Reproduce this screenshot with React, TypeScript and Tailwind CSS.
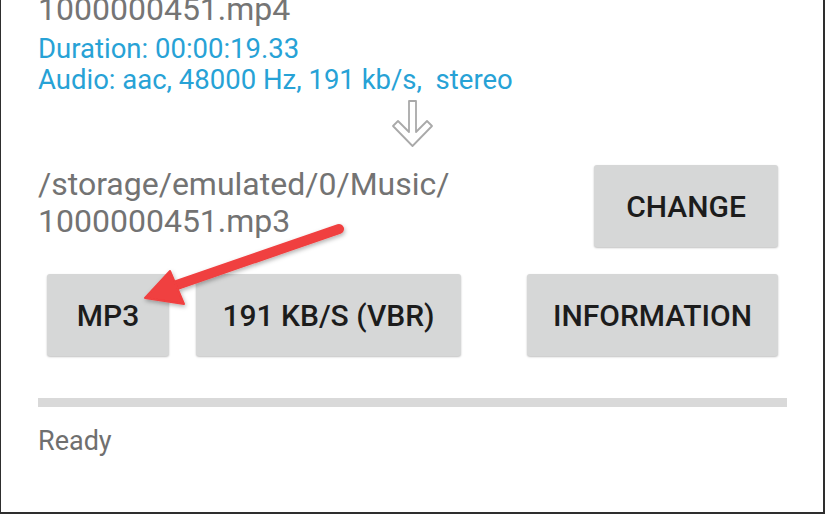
import React from "react";

const font = { fontFamily: "Roboto, 'Noto Sans', sans-serif" };

const Btn = ({ label, className }: { label: string; className: string }) => (
	<button
		type="button"
		className={`flex h-[82px] items-center justify-center rounded-[3px] bg-[#d6d7d7] text-[30px] font-medium text-[#1c1c1c] shadow-[0_1px_2px_rgba(0,0,0,0.25)] ${className}`}
	>
		{label}
	</button>
);

export default function App() {
	return (
		<div
			className="relative h-[514px] w-[825px] overflow-hidden border-b-2 border-l border-r-2 border-[#2e2e2e] bg-white pl-[37px] pr-[36px]"
			style={font}
		>
			<div className="-mt-[9px] text-[32px] leading-[37px] text-[#757575]">
				1000000451.mp4
			</div>

			<div className="mt-[5px] text-[27.5px] leading-[31px] text-[#27a2d6]">
				<div>Duration: 00:00:19.33</div>
				<div>Audio: aac, 48000 Hz, 191 kb/s,&nbsp; stereo</div>
			</div>

			{/* down arrow */}
			<div className="mt-[5px] flex h-[48px] pl-[352px]">
				<svg width="44" height="48" viewBox="0 0 44 48">
					<path
						d="M19 1 L26 1 L26 32 L37 21 L42 26 L22.5 46 L3 26 L8 21 L19 32 Z"
						fill="white"
						stroke="#a9a9a9"
						strokeWidth="1.8"
						strokeLinejoin="round"
					/>
				</svg>
			</div>

			<div className="mt-[17px] flex items-start">
				<div className="pt-[1px] text-[32px] leading-[37px] text-[#737373]">
					<div>/storage/emulated/0/Music/</div>
					<div>1000000451.mp3</div>
				</div>
				<Btn label="CHANGE" className="ml-auto mr-[9px] w-[184px]" />
			</div>

			<div className="mt-[27px] flex">
				<Btn label="MP3" className="ml-[9px] w-[122px]" />
				<Btn label="191 KB/S (VBR)" className="ml-[27px] w-[265px]" />
				<Btn label="INFORMATION" className="ml-auto mr-[9px] w-[251px]" />
			</div>

			<div className="mt-[42px] h-[9px] bg-[#d9d9d9]" />

			<div className="mt-[19px] text-[27px] leading-[30px] text-[#6f6f6f]">
				Ready
			</div>

			{/* red annotation arrow */}
			<svg
				className="pointer-events-none absolute left-0 top-0"
				width="825"
				height="514"
				viewBox="0 0 825 514"
			>
				<defs>
					<filter id="sh" x="-20%" y="-20%" width="140%" height="140%">
						<feDropShadow dx="1" dy="2" stdDeviation="2" floodColor="#000" floodOpacity="0.3" />
					</filter>
				</defs>
				<g filter="url(#sh)" fill="#f03f3f" stroke="#f03f3f">
					<line x1="338" y1="229" x2="170" y2="287" strokeWidth="10" strokeLinecap="round" />
					<polygon points="144,298 169,271 183,304" strokeWidth="2" strokeLinejoin="round" />
				</g>
			</svg>
		</div>
	);
}
